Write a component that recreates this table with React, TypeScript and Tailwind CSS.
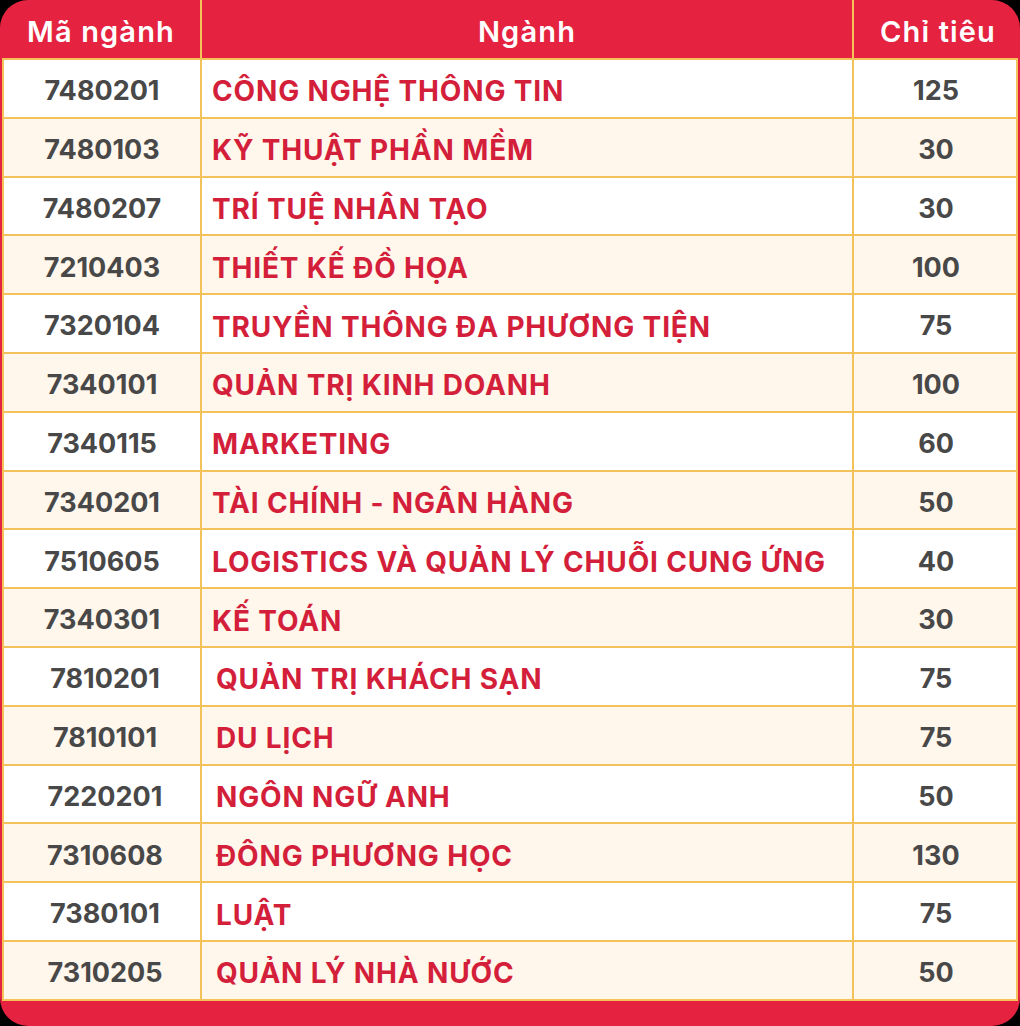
const rows: [string, string, string][] = [
  ["7480201", "CÔNG NGHỆ THÔNG TIN", "125"],
  ["7480103", "KỸ THUẬT PHẦN MỀM", "30"],
  ["7480207", "TRÍ TUỆ NHÂN TẠO", "30"],
  ["7210403", "THIẾT KẾ ĐỒ HỌA", "100"],
  ["7320104", "TRUYỀN THÔNG ĐA PHƯƠNG TIỆN", "75"],
  ["7340101", "QUẢN TRỊ KINH DOANH", "100"],
  ["7340115", "MARKETING", "60"],
  ["7340201", "TÀI CHÍNH - NGÂN HÀNG", "50"],
  ["7510605", "LOGISTICS VÀ QUẢN LÝ CHUỖI CUNG ỨNG", "40"],
  ["7340301", "KẾ TOÁN", "30"],
  ["7810201", "QUẢN TRỊ KHÁCH SẠN", "75"],
  ["7810101", "DU LỊCH", "75"],
  ["7220201", "NGÔN NGỮ ANH", "50"],
  ["7310608", "ĐÔNG PHƯƠNG HỌC", "130"],
  ["7380101", "LUẬT", "75"],
  ["7310205", "QUẢN LÝ NHÀ NƯỚC", "50"],
];

export default function App() {
  return (
    <div
      className="w-[1020px] h-[1026px] bg-black"
      style={{ fontFamily: "Inter, 'Noto Sans', sans-serif" }}
    >
      <div className="flex h-full flex-col overflow-hidden rounded-[28px] bg-[#e52340]">
        <div className="grid h-[58px] grid-cols-[198px_652px_166px] px-[2px] pt-[6px] text-[29px] font-semibold tracking-[0.04em] text-white">
          <div className="flex items-center justify-center">Mã ngành</div>
          <div className="-mt-[6px] flex items-center justify-center border-l-2 border-[#f3c25a] pt-[6px]">
            Ngành
          </div>
          <div className="-mt-[6px] flex items-center justify-center border-l-2 border-[#f3c25a] pt-[6px] pl-[4px]">
            Chỉ tiêu
          </div>
        </div>
        <div className="mx-[2px] border-l-2 border-r-2 border-b-2 border-[#f3c25a]">
          {rows.map(([code, name, quota], i) => (
            <div
              key={code}
              className={`grid h-[58.8px] grid-cols-[196px_652px_164px] border-t-2 border-[#f3c25a] pt-[6px] ${
                i % 2 === 0 ? "bg-white" : "bg-[#fff6ec]"
              }`}
            >
              <div
                className={`flex items-center justify-center text-[27px] font-bold text-[#484848] ${
                  i >= 10 ? "pl-[6px]" : ""
                }`}
              >
                {code}
              </div>
              <div
                className={`-mt-[6px] flex items-center border-l-2 border-[#f3c25a] pt-[6px] text-[28px] font-bold tracking-[0.03em] text-[#d41f3b] ${
                  i >= 10 ? "pl-[14px]" : "pl-[10px]"
                }`}
              >
                {name}
              </div>
              <div className="-mt-[6px] flex items-center justify-center border-l-2 border-[#f3c25a] pt-[6px] pl-[2px] text-[27px] font-bold text-[#484848]">
                {quota}
              </div>
            </div>
          ))}
        </div>
        <div className="flex-1" />
      </div>
    </div>
  );
}
